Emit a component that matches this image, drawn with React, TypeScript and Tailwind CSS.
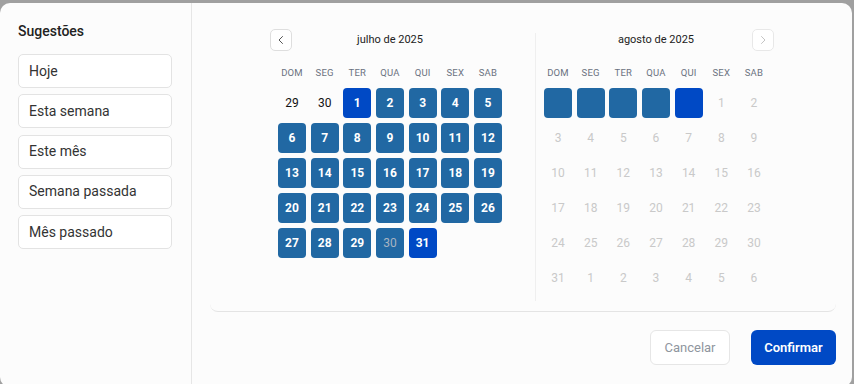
import React from "react";

const heads = ["DOM", "SEG", "TER", "QUA", "QUI", "SEX", "SAB"];

type Cell = { t: string; kind: "out" | "range" | "end" | "rangeGray" | "blank" | "dis" | "boxEmpty" | "endEmpty" };

const july: Cell[] = [
  { t: "29", kind: "out" },
  { t: "30", kind: "out" },
  { t: "1", kind: "end" },
  ...Array.from({ length: 28 }, (_, i) => ({ t: String(i + 2), kind: "range" as const })),
  { t: "30", kind: "rangeGray" },
  { t: "31", kind: "end" },
];

const aug: Cell[] = [
  { t: "", kind: "boxEmpty" },
  { t: "", kind: "boxEmpty" },
  { t: "", kind: "boxEmpty" },
  { t: "", kind: "boxEmpty" },
  { t: "", kind: "endEmpty" },
  ...Array.from({ length: 31 }, (_, i) => ({ t: String(i + 1), kind: "dis" as const })),
  ...Array.from({ length: 6 }, (_, i) => ({ t: String(i + 1), kind: "dis" as const })),
];

function DayCell({ c }: { c: Cell }) {
  const base = "h-[30px] w-[28px] flex items-center justify-center text-[12px] rounded-[4px]";
  switch (c.kind) {
    case "out":
      return <div className={`${base} text-[#111]`}>{c.t}</div>;
    case "range":
      return <div className={`${base} bg-[#2168a3] text-white font-bold`}>{c.t}</div>;
    case "rangeGray":
      return <div className={`${base} bg-[#2168a3] text-[#a7b4c2]`}>{c.t}</div>;
    case "end":
      return <div className={`${base} bg-[#0049c5] text-white font-bold`}>{c.t}</div>;
    case "boxEmpty":
      return <div className={`${base} bg-[#2168a3]`} />;
    case "endEmpty":
      return <div className={`${base} bg-[#0049c5]`} />;
    case "dis":
      return <div className={`${base} text-[#c9c9c9]`}>{c.t}</div>;
    default:
      return <div className={base} />;
  }
}

function Chevron({ dir, light }: { dir: "l" | "r"; light?: boolean }) {
  return (
    <svg width="12" height="12" viewBox="0 0 24 24" fill="none" stroke={light ? "#c4c4c4" : "#555"} strokeWidth="2" strokeLinecap="round" strokeLinejoin="round">
      {dir === "l" ? <path d="M15 5l-7 7 7 7" /> : <path d="M9 5l7 7-7 7" />}
    </svg>
  );
}

function Month({ title, cells, nav }: { title: string; cells: Cell[]; nav: "l" | "r" }) {
  return (
    <div className="w-[240px] flex flex-col">
      <div className="relative h-[22px] mt-[26px] flex items-center justify-center">
        <span className="text-[11px] text-[#222]">{title}</span>
        {nav === "l" ? (
          <div className="absolute left-0 top-0 h-[22px] w-[22px] rounded-[5px] border border-[#dedede] bg-white flex items-center justify-center">
            <Chevron dir="l" />
          </div>
        ) : (
          <div className="absolute right-[2px] top-0 h-[22px] w-[22px] rounded-[5px] border border-[#e8e8e8] bg-white flex items-center justify-center">
            <Chevron dir="r" light />
          </div>
        )}
      </div>
      <div className="px-[8px] mt-[15px] grid grid-cols-7 gap-x-[4.6px]">
        {heads.map((h) => (
          <div key={h} className="w-[28px] flex justify-center text-[9.5px] text-[#6b7280] tracking-[0.2px]">
            {h}
          </div>
        ))}
      </div>
      <div className="px-[8px] mt-[8px] grid grid-cols-7 gap-x-[4.6px] gap-y-[5px]">
        {cells.map((c, i) => (
          <DayCell key={i} c={c} />
        ))}
      </div>
    </div>
  );
}

export default function App() {
  const sugg = ["Hoje", "Esta semana", "Este mês", "Semana passada", "Mês passado"];
  return (
    <div className="h-[384px] w-[854px] bg-[#a0a0a0] overflow-hidden" style={{ fontFamily: "Roboto, 'Noto Sans', sans-serif" }}>
      <div className="mt-[3px] w-[852px] h-[384px] rounded-[10px] bg-[#fcfcfc] flex overflow-hidden">
        <aside className="w-[192px] shrink-0 border-r border-[#e6e6e6] pl-[18px] pr-[19px] pt-[17px]">
          <div className="text-[14px] font-medium text-[#222] leading-[22px]">Sugestões</div>
          <div className="mt-[12px] flex flex-col gap-[6.3px]">
            {sugg.map((s) => (
              <div key={s} className="h-[34px] rounded-[5px] border border-[#e3e3e3] bg-white flex items-center pl-[10px] text-[14px] text-[#333]">
                {s}
              </div>
            ))}
          </div>
        </aside>
        <main className="flex-1 flex flex-col px-[18px] pr-[16px]">
          <div className="h-[309px] border-b border-[#e4e4e4] rounded-b-[8px] flex justify-center">
            <Month title="julho de 2025" cells={july} nav="l" />
            <div className="ml-[25px] mt-[30px] h-[268px] w-px bg-[#efefef]" />
            <Month title="agosto de 2025" cells={aug} nav="r" />
          </div>
          <div className="flex justify-end gap-[21px] mt-[18px]">
            <button className="h-[35px] w-[80px] rounded-[6px] border border-[#e6e6e6] bg-white text-[13px] text-[#8f969e]">
              Cancelar
            </button>
            <button className="h-[35px] w-[85px] rounded-[6px] bg-[#0049c5] text-[13px] font-semibold text-white">
              Confirmar
            </button>
          </div>
        </main>
      </div>
    </div>
  );
}
